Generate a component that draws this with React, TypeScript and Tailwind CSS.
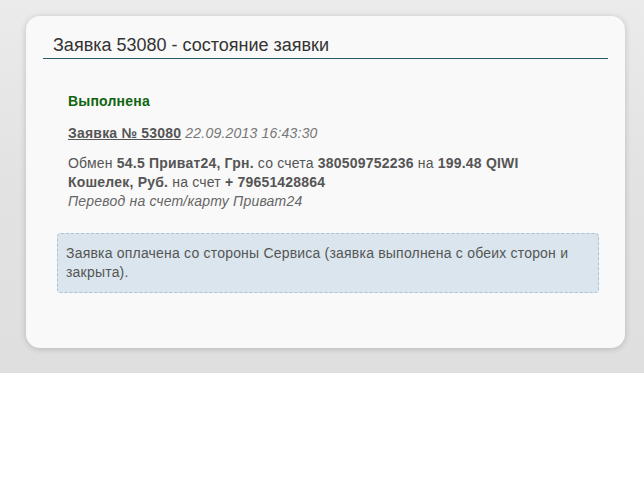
export default function App() {
  return (
    <div className="w-[644px] h-[489px] bg-white font-['Liberation_Sans',Arial,sans-serif]">
      <div className="h-[373px] bg-gradient-to-b from-[#ebebeb] via-[#e2e2e2] to-[#dfdfdf] pt-[16px] pl-[26px] pr-[19px]">
        <div className="h-[332px] rounded-[14px] bg-[#f9f9f9] shadow-[0_1px_6px_rgba(0,0,0,0.18)]">
          <div className="mx-[17px] pt-[19px] pb-[3px] pl-[10px] border-b border-[#2b5a6b]">
            <h1 className="text-[18px] leading-[20px] text-[#333]">Заявка 53080 - состояние заявки</h1>
          </div>
          <div className="pl-[31px] pr-[26px] pt-[33px]">
            <div className="pl-[11px] pr-[20px] text-[14px] leading-[19px] tracking-[0.2px] text-[#555]">
              <p className="font-bold text-[#0f6410]">Выполнена</p>
              <p className="mt-[13px]">
                <a href="#" className="font-bold underline text-[#555]">Заявка № 53080</a>{" "}
                <span className="italic text-[#777]">22.09.2013 16:43:30</span>
              </p>
              <p className="mt-[11px]">
                Обмен <b>54.5 Приват24, Грн.</b> со счета <b>380509752236</b> на <b>199.48 QIWI Кошелек, Руб.</b> на счет <b>+ 79651428864</b>
                <br />
                <i className="text-[#666]">Перевод на счет/карту Приват24</i>
              </p>
            </div>
            <div className="mt-[22px] rounded-[4px] border border-dashed border-[#a7c4d8] bg-[#dae5ed] px-[8px] py-[10px] text-[14px] leading-[19px] tracking-[0.2px] text-[#555]">
              Заявка оплачена со стороны Сервиса (заявка выполнена с обеих сторон и закрыта).
            </div>
          </div>
        </div>
      </div>
    </div>
  )
}
